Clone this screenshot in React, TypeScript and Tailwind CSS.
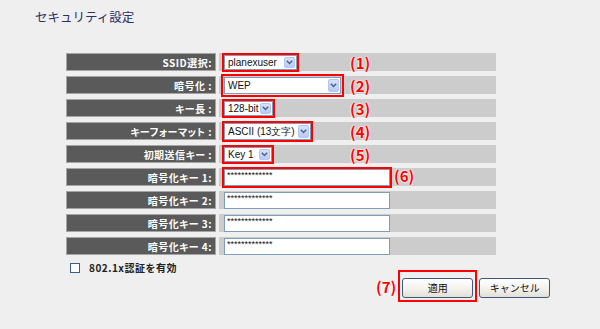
import React from "react";

const jp = "font-['Noto_Sans_CJK_JP','Noto_Sans',sans-serif]";

const Mark = ({ n }: { n: number }) => (
  <span
    className={`${jp} text-[15px] font-bold leading-none text-[#ff0000] [text-shadow:0_0_2px_#fff,0_0_2px_#fff,0_0_1px_#fff]`}
  >
    ({n})
  </span>
);

const Arrow = () => (
  <div className="h-full w-[13px] p-[1px] shrink-0">
    <div className="w-full h-full rounded-[2px] border border-[#b4c6ef] bg-gradient-to-b from-[#d6e2fd] to-[#b7cbf7] flex items-center justify-center">
      <svg width="7" height="5" viewBox="0 0 7 5">
        <path d="M0.8 0.8 L3.5 3.5 L6.2 0.8" fill="none" stroke="#4d6185" strokeWidth="1.5" />
      </svg>
    </div>
  </div>
);

const Select = ({ text, w, h, offset }: { text: string; w: string; h: string; offset: string }) => (
  <div
    className={`${w} ${h} ${offset} flex items-center bg-white border border-[#7f9db9] outline-2 outline-[#ff0000] font-['Liberation_Sans',Arial,sans-serif] text-[10px] text-[#111]`}
  >
    <span className="flex-1 pl-[3px] whitespace-nowrap">{text}</span>
    <Arrow />
  </div>
);

const KeyInput = ({ red }: { red?: boolean }) => (
  <div
    className={`w-[166px] h-[17px] bg-white border border-[#7f9db9] pl-[2px] font-['Liberation_Sans',Arial,sans-serif] text-[9px] leading-[10px] text-[#111] ${
      red ? "outline-2 outline-[#ff0000]" : ""
    }`}
  >
    *************
  </div>
);

const Row = ({ label, children }: { label: string; children: React.ReactNode }) => (
  <div className="flex gap-[3px] h-[18px]">
    <div
      className={`w-[150px] h-full bg-[#5a5a5a] border border-[#a5a5a5] flex items-center justify-end pr-[3px] text-white font-bold text-[10px] tracking-[0.5px] [font-feature-settings:'palt'] ${jp}`}
    >
      {label}
    </div>
    <div className="relative w-[277px] h-full bg-[#cccccc] flex items-center pl-[5px]">{children}</div>
  </div>
);

const MarkAt = ({ n }: { n: number }) => (
  <div className="absolute left-[131px] -top-[2px]">
    <Mark n={n} />
  </div>
);

const Button = ({ label }: { label: string }) => (
  <button
    className={`w-[71px] h-[20px] rounded-[3px] border border-[#3d5a7e] bg-gradient-to-b from-[#ffffff] via-[#f4f3ee] to-[#e2e0d6] text-[10px] text-[#111] ${jp}`}
  >
    {label}
  </button>
);

export default function App() {
  return (
    <div className="w-[600px] h-[329px] bg-[#efefef] overflow-hidden">
      <h1 className={`pl-[35px] pt-[9px] text-[12.5px] leading-[15px] text-[#2b2f66] ${jp}`}>セキュリティ設定</h1>

      <div className="ml-[66px] mt-[29px] flex flex-col gap-[5px]">
        <Row label="SSID選択:">
          <Select text="planexuser" w="w-[73px]" h="h-[15px]" offset="outline-offset-0" />
          <MarkAt n={1} />
        </Row>
        <Row label="暗号化 :">
          <Select text="WEP" w="w-[117px]" h="h-[17px]" offset="outline-offset-1" />
          <MarkAt n={2} />
        </Row>
        <Row label="キー長 :">
          <Select text="128-bit" w="w-[49px]" h="h-[15px]" offset="outline-offset-0" />
          <MarkAt n={3} />
        </Row>
        <Row label="キーフォーマット :">
          <Select text="ASCII (13文字)" w="w-[87px]" h="h-[17px]" offset="outline-offset-0" />
          <MarkAt n={4} />
        </Row>
        <Row label="初期送信キー :">
          <Select text="Key 1" w="w-[48px]" h="h-[15px]" offset="outline-offset-0" />
          <MarkAt n={5} />
        </Row>
        <Row label="暗号化キー 1:">
          <KeyInput red />
          <span className="ml-[4px] -mt-[3px]">
            <Mark n={6} />
          </span>
        </Row>
        <Row label="暗号化キー 2:">
          <KeyInput />
        </Row>
        <Row label="暗号化キー 3:">
          <KeyInput />
        </Row>
        <Row label="暗号化キー 4:">
          <KeyInput />
        </Row>
      </div>

      <div className="ml-[70px] mt-[7px] h-[11px] flex items-center gap-[9px]">
        <div className="w-[10px] h-[10px] bg-white border border-[#3a5f8a]" />
        <span className={`text-[10px] font-bold text-[#222] tracking-[0.5px] ${jp}`}>802.1x認証を有効</span>
      </div>

      <div className="ml-[376px] -mt-[3px] flex items-center">
        <Mark n={7} />
        <div className="ml-[2px] border-2 border-[#ff0000] p-[2px]">
          <Button label="適用" />
        </div>
        <div className="ml-[2px]">
          <Button label="キャンセル" />
        </div>
      </div>
    </div>
  );
}
